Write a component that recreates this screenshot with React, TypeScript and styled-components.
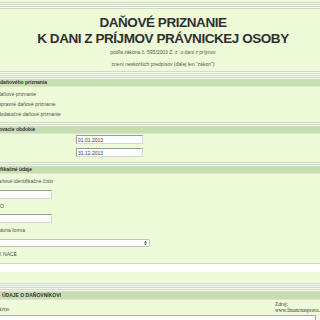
import React from "react";
import styled, { createGlobalStyle } from "styled-components";

const GlobalStyle = createGlobalStyle`
  html, body {
    margin: 0;
    padding: 0;
    background: #eefbd8;
    overflow: hidden;
  }
  body {
    font-family: "Liberation Sans", Arial, sans-serif;
  }
`;

// the form is scrolled a bit to the right, so its left edge is off screen
const Page = styled.div`
  width: 358px;
  margin-left: -16px;
  padding-top: 2px;
  color: #4a4a4a;
`;

const Stripes = styled.div<{ $h?: number }>`
  height: ${(p) => p.$h ?? 4}px;
  background: repeating-linear-gradient(
    to bottom,
    #d3dac9 0 1px,
    #f3f8ec 1px 2px
  );
`;

const TitleBlock = styled.header`
  text-align: center;
  padding: 5.5px 0 4px;
`;

const Title = styled.h1`
  margin: 0;
  font-size: 13.5px;
  line-height: 16px;
  font-weight: 700;
  color: #2f2f2f;
  letter-spacing: -0.45px;
`;

const Sub = styled.p<{ $gap: number }>`
  margin: ${(p) => p.$gap}px 0 0;
  font-size: 5px;
  line-height: 6px;
  color: #555;
`;

const Band = styled.h2<{ $indent?: number; $caps?: boolean }>`
  margin: 0;
  height: 7px;
  padding-left: ${(p) => p.$indent ?? 3}px;
  background: #c6deb1;
  border-bottom: 1px solid #dce6d0;
  font-size: 5px;
  line-height: 7px;
  font-weight: 700;
  color: #333;
  white-space: nowrap;
  text-transform: ${(p) => (p.$caps ? "uppercase" : "none")};
`;

const Choices = styled.div`
  padding: 2px 0 3px;
`;

const Choice = styled.label`
  display: flex;
  align-items: center;
  gap: 4px;
  height: 10px;
  padding-left: 4px;
  font-size: 5px;
  color: #505050;
`;

const Radio = styled.span`
  width: 6px;
  height: 6px;
  border-radius: 50%;
  border: 1px solid #999;
  background: #fff;
  box-sizing: border-box;
`;

const Period = styled.div`
  display: flex;
  flex-direction: column;
  gap: 4px;
  padding: 1px 0 5px 92px;
`;

const TextInput = styled.input<{ $w: number }>`
  display: block;
  box-sizing: border-box;
  width: ${(p) => p.$w}px;
  height: 9px;
  margin: 0;
  padding: 0 1px;
  border: 1px solid;
  border-color: #9d9d9d #d6d6d6 #d6d6d6 #9d9d9d;
  background: #fff;
  font-family: "Liberation Sans", Arial, sans-serif;
  font-size: 5px;
  color: #333;
  outline: none;
`;

const Fields = styled.div`
  padding: 0 0 11px 11px;
`;

const Field = styled.div`
  display: flex;
  flex-direction: column;
  align-items: flex-start;
  gap: 5.5px;
  padding-top: 4px;
`;

const FieldLabel = styled.span`
  font-size: 5px;
  line-height: 6px;
  color: #505050;
  white-space: nowrap;
`;

const Select = styled.div`
  box-sizing: border-box;
  width: 155px;
  height: 8.5px;
  border: 1px solid #c4c4c4;
  border-radius: 2px;
  background: #fff;
  display: flex;
  align-items: center;
  justify-content: flex-end;
  padding-right: 2px;
`;

const WideInput = styled.div`
  box-sizing: border-box;
  align-self: stretch;
  height: 9px;
  border-top: 1px solid #cfd3c9;
  background: #fff;
`;

const NameRow = styled.div`
  display: grid;
  grid-template-columns: 291px 1fr;
  align-items: start;
`;

const NameLabel = styled.span`
  margin-top: 6px;
  padding-left: 11px;
  font-size: 5px;
  line-height: 6px;
  color: #505050;
`;

const Source = styled.div`
  margin-top: 2.5px;
  font-family: "Liberation Serif", "Times New Roman", serif;
  font-size: 5.2px;
  line-height: 5.5px;
  color: #333;
  white-space: nowrap;
`;

const NameBox = styled.div`
  box-sizing: border-box;
  margin: 2px 0 0 12px;
  width: 320px;
  height: 20px;
  border: 1px solid #a9a9a9;
  background: #fff;
`;

const Arrow = () => (
  <svg width="3" height="4" viewBox="0 0 3 4">
    <path d="M0 1.6 L1.5 0 L3 1.6 Z M0 2.4 L1.5 4 L3 2.4 Z" fill="#333" />
  </svg>
);

const returnTypes = [
  "daňové priznanie",
  "opravné daňové priznanie",
  "dodatočné daňové priznanie",
];

export default function App() {
  return (
    <>
      <GlobalStyle />
      <Page>
        <Stripes $h={7} />
        <TitleBlock>
          <Title>
            DAŇOVÉ PRIZNANIE
            <br />K DANI Z PRÍJMOV PRÁVNICKEJ OSOBY
          </Title>
          <Sub $gap={2.5}>podľa zákona č. 595/2003 Z. z. o dani z príjmov</Sub>
          <Sub $gap={6}>znení neskorších predpisov (ďalej len "zákon")</Sub>
        </TitleBlock>

        <Stripes $h={8} />
        <Band>Druh daňového priznania</Band>
        <Choices>
          {returnTypes.map((t) => (
            <Choice key={t}>
              <Radio />
              {t}
            </Choice>
          ))}
        </Choices>

        <Stripes />
        <Band>Zdaňovacie obdobie</Band>
        <Period>
          <TextInput $w={67} defaultValue="01.01.2013" />
          <TextInput $w={67} defaultValue="31.12.2013" />
        </Period>

        <Stripes />
        <Band>Identifikačné údaje</Band>
        <Fields>
          <Field>
            <FieldLabel>Daňové identifikačné číslo</FieldLabel>
            <TextInput $w={57} />
          </Field>
          <Field>
            <FieldLabel>IČO</FieldLabel>
            <TextInput $w={57} />
          </Field>
          <Field>
            <FieldLabel>Právna forma</FieldLabel>
            <Select>
              <Arrow />
            </Select>
          </Field>
          <Field>
            <FieldLabel>SK NACE</FieldLabel>
            <WideInput />
          </Field>
        </Fields>

        <Stripes $h={9} />
        <Band $indent={18} $caps>
          Údaje o daňovníkovi
        </Band>
        <NameRow>
          <NameLabel>Názov</NameLabel>
          <Source>
            Zdroj:
            <br />
            www.financnasprava.sk
          </Source>
        </NameRow>
        <NameBox />
      </Page>
    </>
  );
}
